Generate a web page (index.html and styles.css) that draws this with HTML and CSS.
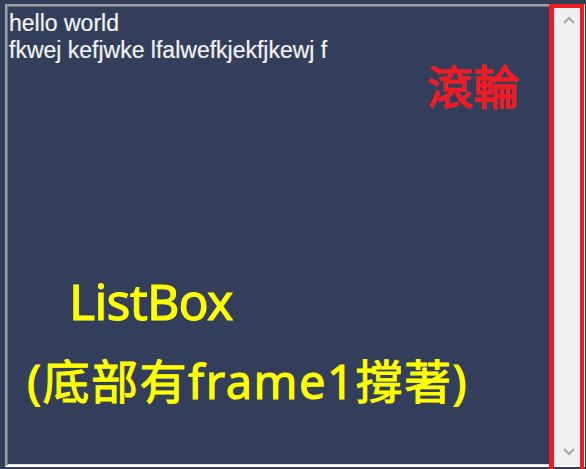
FILE: index.html
```html
<!DOCTYPE html>
<html lang="zh-Hant">
<head>
<meta charset="utf-8">
<title>ListBox</title>
<link rel="stylesheet" href="styles.css">
</head>
<body>
<div class="stage">
  <div class="listbox">
    <div class="list">
      <div class="item">hello world</div>
      <div class="item">fkwej kefjwke lfalwefkjekfjkewj f</div>
    </div>
    <div class="scrollbar">
      <div class="arrow">
        <svg width="12" height="8" viewBox="0 0 12 8"><path d="M1 7 L6 2 L11 7" fill="none" stroke="#a6a6a6" stroke-width="2"/></svg>
      </div>
      <div class="track"></div>
      <div class="arrow">
        <svg width="12" height="8" viewBox="0 0 12 8"><path d="M1 1 L6 6 L11 1" fill="none" stroke="#a6a6a6" stroke-width="2"/></svg>
      </div>
    </div>
  </div>
  <div class="mark-box"></div>
  <div class="note note-wheel">滾輪</div>
  <div class="note note-listbox">ListBox</div>
  <div class="note note-frame">(底部有frame1撐著)</div>
</div>
</body>
</html>
```

FILE: styles.css
```css
html, body {
  margin: 0;
  padding: 0;
}
body {
  background: #333f5a;
  width: 586px;
  height: 469px;
  overflow: hidden;
}
.stage {
  position: relative;
  width: 586px;
  height: 469px;
  box-sizing: border-box;
  padding: 4px 1px 0 5px;
}
.listbox {
  height: 463px;
  box-sizing: border-box;
  display: flex;
  border-style: solid;
  border-width: 2px;
  border-color: #a0a0a0 #ffffff #ffffff #a0a0a0;
  box-shadow: inset 1px 1px 0 #6c7385, inset -1px -1px 0 #e3e3e3;
}
.list {
  flex: 1;
  padding: 4px 0 0 2px;
  font-family: "Liberation Sans", Arial, sans-serif;
  font-size: 23px;
  line-height: 26.5px;
  color: #f2f2f2;
  white-space: nowrap;
  overflow: hidden;
  -webkit-text-stroke: 0.2px #f2f2f2;
}
.scrollbar {
  width: 29px;
  background: #f0f0f0;
  border-left: 1px solid #4a5674;
  display: flex;
  flex-direction: column;
}
.arrow {
  height: 27px;
  display: flex;
  align-items: center;
  justify-content: center;
}
.track {
  flex: 1;
}
.mark-box {
  position: absolute;
  left: 549px;
  top: 4px;
  width: 35px;
  height: 480px;
  box-sizing: border-box;
  border: 4px solid #ed1c24;
  border-left-width: 5px;
}
.note {
  position: absolute;
  white-space: nowrap;
  line-height: 1;
}
.note-wheel {
  left: 427px;
  top: 61px;
  font-family: "Noto Sans CJK TC", "Noto Sans", sans-serif;
  font-size: 46px;
  font-weight: 400;
  color: #ed1c24;
  -webkit-text-stroke: 1.4px #ed1c24;
}
.note-listbox {
  left: 69px;
  top: 276px;
  font-family: "Noto Sans", "Noto Sans CJK TC", sans-serif;
  font-size: 50px;
  letter-spacing: -0.8px;
  color: #ffff00;
  -webkit-text-stroke: 1px #ffff00;
}
.note-frame {
  left: 27px;
  top: 358px;
  font-family: "Noto Sans", "Noto Sans CJK TC", sans-serif;
  font-size: 47px;
  letter-spacing: 1.5px;
  color: #ffff00;
  -webkit-text-stroke: 1px #ffff00;
}
```
